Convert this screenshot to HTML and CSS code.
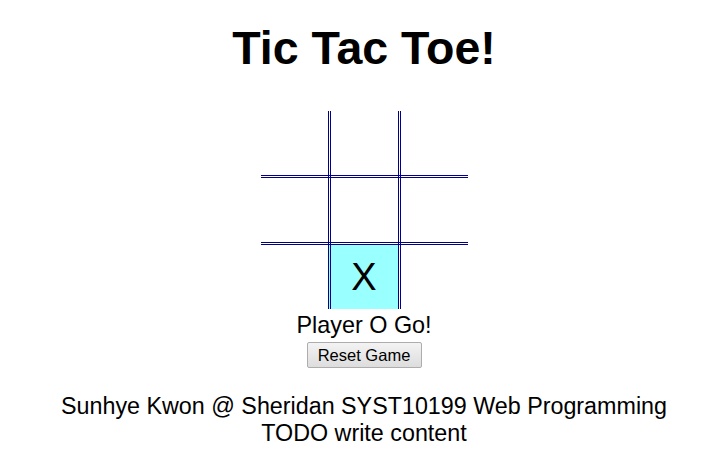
FILE: index.html
```html
<!DOCTYPE html>
<html lang="en">
<head>
<meta charset="utf-8">
<title>Tic Tac Toe!</title>
<link rel="stylesheet" href="styles.css">
</head>
<body>
<main class="page">
  <h1 class="title">Tic Tac Toe!</h1>
  <table class="board">
    <tr><td class="cell"></td><td class="cell"></td><td class="cell"></td></tr>
    <tr><td class="cell"></td><td class="cell"></td><td class="cell"></td></tr>
    <tr><td class="cell"></td><td class="cell cell-active">X</td><td class="cell"></td></tr>
  </table>
  <p class="status">Player O Go!</p>
  <button class="reset" type="button">Reset Game</button>
  <footer class="footer">
    <p class="footer-line">Sunhye Kwon @ Sheridan SYST10199 Web Programming</p>
    <p class="footer-line">TODO write content</p>
  </footer>
</main>
</body>
</html>
```

FILE: styles.css
```css
html, body {
  margin: 0;
  padding: 0;
  background: #ffffff;
}

.page {
  display: flex;
  flex-direction: column;
  align-items: center;
  padding-left: 20px;
  font-family: "Liberation Sans", Arial, sans-serif;
  color: #000;
}

.title {
  margin: 22px 0 0;
  font-size: 46.5px;
  font-weight: bold;
  line-height: 52px;
}

.board {
  margin-top: 37px;
  border-collapse: collapse;
  border-style: hidden;
}

.cell {
  width: 67px;
  height: 64px;
  padding: 0;
  border: 3px double #000080;
  text-align: center;
  vertical-align: middle;
  font-size: 38px;
  line-height: 1;
}

.cell-active {
  background: #99ffff;
}

.status {
  margin: 3px 0 0;
  font-size: 23.4px;
  line-height: 26px;
}

.reset {
  margin-top: 4px;
  width: 115px;
  height: 26px;
  padding: 0;
  font-family: "Liberation Sans", Arial, sans-serif;
  font-size: 16.5px;
  color: #000;
  background: linear-gradient(#f3f3f3, #dddddd);
  border: 1px solid #adadad;
  border-radius: 2px;
}

.footer {
  margin-top: 25px;
  text-align: center;
}

.footer-line {
  margin: 0;
  font-size: 23.3px;
  line-height: 26.5px;
}
```
